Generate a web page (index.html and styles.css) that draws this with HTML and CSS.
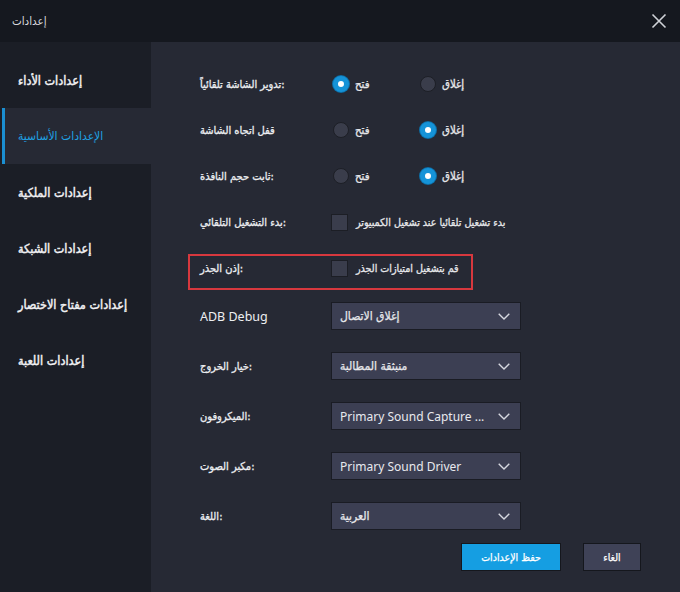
FILE: index.html
```html
<!DOCTYPE html>
<html lang="ar">
<head>
    <meta charset="UTF-8">
    <meta name="viewport" content="width=device-width, initial-scale=1.0">
    <title>إعدادات</title>
    <link rel="stylesheet" href="styles.css">
</head>
<body>

<div class="window">
    <div class="titlebar">
        <span class="title">إعدادات</span>
        <svg class="close" width="16" height="16" viewBox="0 0 16 16">
            <path d="M1.5 1.5 L14.5 14.5 M14.5 1.5 L1.5 14.5" stroke="#d0d2d8" stroke-width="1.6" fill="none"/>
        </svg>
    </div>

    <div class="content">
        <div class="sidebar">
            <div class="nav-item">إعدادات الأداء</div>
            <div class="nav-item active">الإعدادات الأساسية</div>
            <div class="nav-item">إعدادات الملكية</div>
            <div class="nav-item">إعدادات الشبكة</div>
            <div class="nav-item">إعدادات مفتاح الاختصار</div>
            <div class="nav-item">إعدادات اللعبة</div>
        </div>

        <div class="main">
            <div class="row">
                <span class="label">تدوير الشاشة تلقائياً:</span>
                <div class="radios">
                    <span class="option"><span class="radio checked"></span>فتح</span>
                    <span class="option"><span class="radio"></span>إغلاق</span>
                </div>
            </div>
            <div class="row">
                <span class="label">قفل اتجاه الشاشة</span>
                <div class="radios">
                    <span class="option"><span class="radio"></span>فتح</span>
                    <span class="option"><span class="radio checked"></span>إغلاق</span>
                </div>
            </div>
            <div class="row">
                <span class="label">ثابت حجم النافذة:</span>
                <div class="radios">
                    <span class="option"><span class="radio"></span>فتح</span>
                    <span class="option"><span class="radio checked"></span>إغلاق</span>
                </div>
            </div>
            <div class="row">
                <span class="label">بدء التشغيل التلقائي:</span>
                <span class="check"><span class="box"></span>بدء تشغيل تلقائيا عند تشغيل الكمبيوتر</span>
            </div>
            <div class="row top">
                <div class="highlight">
                    <span class="label">إذن الجذر:</span>
                    <span class="check"><span class="box"></span>قم بتشغيل امتيازات الجذر</span>
                </div>
            </div>

            <div class="row tall">
                <span class="label latin">ADB Debug</span>
                <div class="select"><span>إغلاق الاتصال</span><svg width="12" height="7" viewBox="0 0 12 7"><path d="M0.7 0.7 L6 6 L11.3 0.7" stroke="#d6d8e0" stroke-width="1.4" fill="none"/></svg></div>
            </div>
            <div class="row tall">
                <span class="label">خيار الخروج:</span>
                <div class="select"><span>منبثقة المطالبة</span><svg width="12" height="7" viewBox="0 0 12 7"><path d="M0.7 0.7 L6 6 L11.3 0.7" stroke="#d6d8e0" stroke-width="1.4" fill="none"/></svg></div>
            </div>
            <div class="row tall">
                <span class="label">الميكروفون:</span>
                <div class="select"><span class="latin">Primary Sound Capture ...</span><svg width="12" height="7" viewBox="0 0 12 7"><path d="M0.7 0.7 L6 6 L11.3 0.7" stroke="#d6d8e0" stroke-width="1.4" fill="none"/></svg></div>
            </div>
            <div class="row tall">
                <span class="label">مكبر الصوت:</span>
                <div class="select"><span class="latin">Primary Sound Driver</span><svg width="12" height="7" viewBox="0 0 12 7"><path d="M0.7 0.7 L6 6 L11.3 0.7" stroke="#d6d8e0" stroke-width="1.4" fill="none"/></svg></div>
            </div>
            <div class="row tall">
                <span class="label">اللغة:</span>
                <div class="select"><span>العربية</span><svg width="12" height="7" viewBox="0 0 12 7"><path d="M0.7 0.7 L6 6 L11.3 0.7" stroke="#d6d8e0" stroke-width="1.4" fill="none"/></svg></div>
            </div>

            <div class="footer">
                <button class="btn primary">حفظ الإعدادات</button>
                <button class="btn">الغاء</button>
            </div>
        </div>
    </div>
</div>

</body>
</html>
```

FILE: styles.css
```css
body {
    margin: 0;
    font-family: "DejaVu Sans", sans-serif;
    font-stretch: condensed;
    font-size: 11px;
    color: #e6e7ea;
    background: #15181f;
    white-space: nowrap;
}
.window {
    width: 680px;
    height: 592px;
    display: flex;
    flex-direction: column;
    overflow: hidden;
}
.titlebar {
    height: 42px;
    flex: none;
    display: flex;
    align-items: center;
    justify-content: space-between;
    padding: 0 13px 0 12px;
    background: #15181f;
}
.title {
    font-size: 11.5px;
    color: #d8d9dd;
}
.content {
    flex: 1;
    display: flex;
}
.sidebar {
    width: 151px;
    flex: none;
    background: #1b1e26;
    padding-top: 10px;
}
.nav-item {
    height: 56px;
    display: flex;
    align-items: center;
    padding-left: 18px;
    font-size: 12.5px;
    color: #f0f0f2;
    -webkit-text-stroke: 0.45px #f0f0f2;
}
.nav-item.active {
    margin-left: 2px;
    padding-left: 13px;
    border-left: 3px solid #1b8fd2;
    background: #262934;
    color: #1fa0e2;
    font-size: 12px;
    -webkit-text-stroke: 0;
}
.main {
    flex: 1;
    background: #262934;
    padding: 19px 0 0 49px;
}
.row {
    height: 46px;
    display: flex;
    align-items: center;
}
.row.tall {
    height: 50px;
}
.row.top {
    align-items: flex-start;
}
.label {
    width: 131px;
    flex: none;
    font-size: 11px;
    color: #eceef1;
    -webkit-text-stroke: 0.3px #eceef1;
}
.latin {
    font-family: "Noto Sans", sans-serif;
    font-stretch: normal;
    font-size: 12.5px;
    -webkit-text-stroke: 0;
}
.radios {
    display: flex;
    margin-left: 2px;
}
.option {
    width: 87px;
    display: flex;
    align-items: center;
    gap: 6px;
    font-size: 11.3px;
    -webkit-text-stroke: 0.3px #e6e7ea;
}
.radio {
    width: 16px;
    height: 16px;
    box-sizing: border-box;
    border-radius: 50%;
    background: #3a3d4b;
    border: 1px solid #1d1f26;
}
.radio.checked {
    background: #ffffff;
    border: 5px solid #1593d8;
    box-shadow: 0 0 0 1px #0d6fa8;
}
.check {
    display: flex;
    align-items: center;
    gap: 8px;
    font-size: 10.6px;
    -webkit-text-stroke: 0.3px #e6e7ea;
}
.box {
    width: 17px;
    height: 17px;
    box-sizing: border-box;
    background: #3a3d4c;
    border: 1px solid #1c1e25;
}
.highlight {
    margin: 9px 0 0 -12px;
    width: 285px;
    height: 36px;
    box-sizing: border-box;
    border: 2px solid #d7383e;
    padding: 0 0 8px 10px;
    display: flex;
    align-items: center;
}
.select {
    width: 190px;
    height: 28px;
    box-sizing: border-box;
    display: flex;
    align-items: center;
    justify-content: space-between;
    padding: 0 10px 0 8px;
    background: #3c3f53;
    border: 1px solid #1a1c24;
    font-size: 12px;
    -webkit-text-stroke: 0.25px #e6e7ea;
}
.select .latin {
    font-size: 12px;
    color: #e8e9ee;
}
.footer {
    display: flex;
    gap: 22px;
    margin-top: 2px;
    padding-left: 261px;
}
.btn {
    height: 28px;
    border: 1px solid #15171d;
    font-family: "DejaVu Sans", sans-serif;
    font-stretch: condensed;
    font-size: 10.5px;
    color: #ffffff;
    -webkit-text-stroke: 0.25px #ffffff;
    background: #3f4257;
    width: 58px;
    padding: 0;
}
.btn.primary {
    width: 100px;
    background: #159ee2;
}
```
